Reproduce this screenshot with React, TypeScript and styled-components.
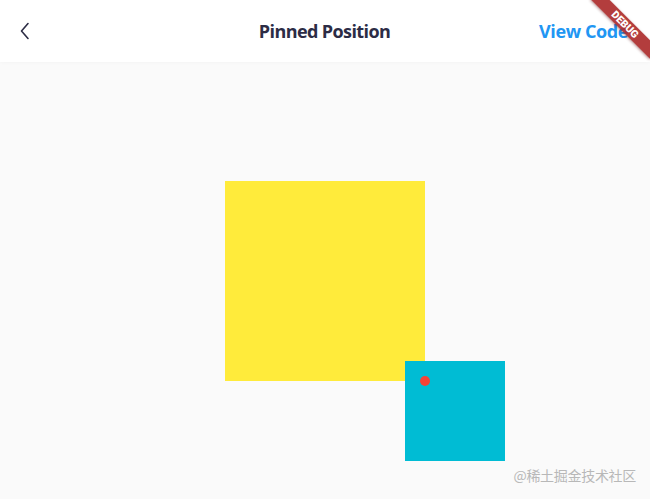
import React from "react";
import styled, { createGlobalStyle } from "styled-components";

const Global = createGlobalStyle`
  html, body { margin: 0; padding: 0; }
  body { font-family: "Open Sans", "Noto Sans CJK SC", sans-serif; background: #fafafa; }
`;

const Page = styled.div`
  position: relative;
  width: 650px;
  height: 499px;
  overflow: hidden;
  display: flex;
  flex-direction: column;
  background: #fafafa;
`;

const Header = styled.header`
  height: 62px;
  flex: none;
  background: #ffffff;
  display: grid;
  grid-template-columns: 1fr auto 1fr;
  align-items: center;
  padding: 0 22px 0 15px;
  box-shadow: 0 0 4px rgba(0, 0, 0, 0.04);
  position: relative;
  z-index: 1;
`;

const BackButton = styled.button`
  justify-self: start;
  width: 20px;
  height: 24px;
  padding: 0;
  border: none;
  background: none;
  display: flex;
  align-items: center;
  justify-content: center;
  color: #2c2c45;
`;

const Title = styled.h1`
  margin: 0;
  font-size: 18px;
  font-weight: 700;
  color: #2c2c45;
  letter-spacing: -0.6px;
  transform: translateX(3px);
`;

const Action = styled.span`
  justify-self: end;
  font-size: 18px;
  font-weight: 700;
  color: #2196f3;
  letter-spacing: -0.4px;
`;

const Body = styled.main`
  flex: 1;
  display: flex;
  align-items: center;
  justify-content: center;
`;

const Stack = styled.div`
  position: relative;
  width: 200px;
  height: 200px;
  margin-top: 1px;
`;

const Square = styled.div<{ $size: number; $color: string }>`
  width: ${(p) => p.$size}px;
  height: ${(p) => p.$size}px;
  background: ${(p) => p.$color};
`;

const Pinned = styled.div`
  position: absolute;
  left: 180px;
  top: 180px;
`;

const Dot = styled.div`
  position: absolute;
  left: 15px;
  top: 15px;
  width: 10px;
  height: 10px;
  border-radius: 50%;
  background: #f44336;
`;

const Banner = styled.div`
  position: absolute;
  top: 18px;
  right: -17px;
  width: 84px;
  height: 13px;
  transform: rotate(45deg);
  background: rgba(172, 44, 44, 0.92);
  box-shadow: 0 1px 3px rgba(90, 0, 0, 0.45);
  color: #fff;
  font-family: Roboto, "DejaVu Sans", sans-serif;
  font-weight: 900;
  font-size: 10.5px;
  line-height: 13px;
  text-align: center;
  z-index: 2;
`;

const Watermark = styled.div`
  position: absolute;
  right: 14px;
  bottom: 14px;
  font-family: "Noto Sans CJK SC", sans-serif;
  font-size: 14px;
  color: #b8b8b8;
  letter-spacing: -0.3px;
`;

export default function App() {
  return (
    <>
      <Global />
      <Page>
        <Header>
          <BackButton aria-label="back">
            <svg width="12" height="18" viewBox="0 0 12 18" fill="none">
              <path d="M9 1.5 L2.5 9 L9 16.5" stroke="#2c2c45" strokeWidth="1.6" strokeLinecap="round" strokeLinejoin="round" />
            </svg>
          </BackButton>
          <Title>Pinned Position</Title>
          <Action>View Code</Action>
        </Header>
        <Body>
          <Stack>
            <Square $size={200} $color="#ffeb3b" />
            <Pinned>
              <Square $size={100} $color="#00bcd4" />
              <Dot />
            </Pinned>
          </Stack>
        </Body>
        <Banner>DEBUG</Banner>
        <Watermark>@稀土掘金技术社区</Watermark>
      </Page>
    </>
  );
}
